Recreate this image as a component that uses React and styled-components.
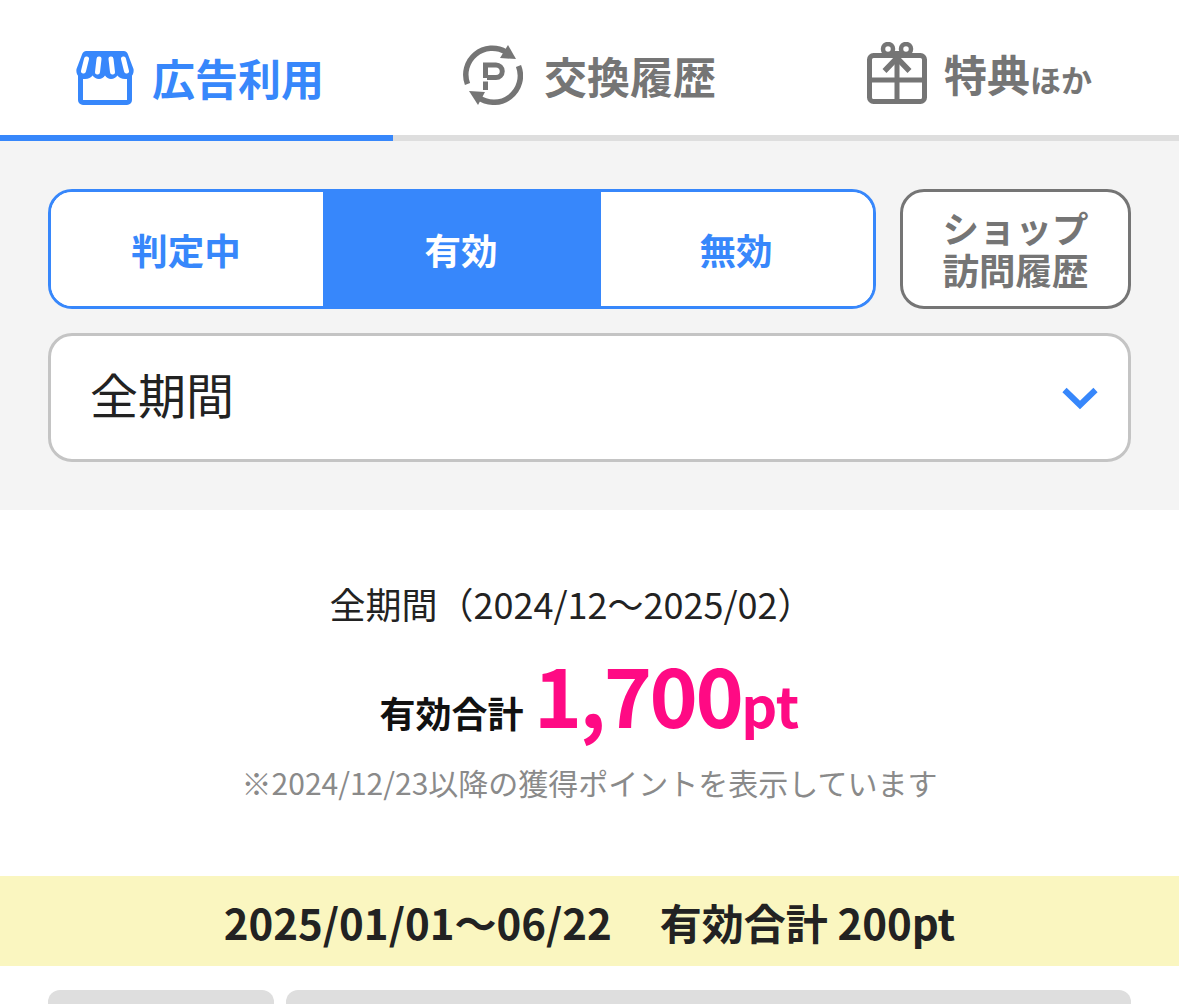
import React from 'react';
import styled, { createGlobalStyle } from 'styled-components';

const blue = '#3787fb';
const grey = '#757575';

const GlobalStyle = createGlobalStyle`
  html, body { margin: 0; padding: 0; background: #fff; }
  body {
    font-family: "Noto Sans CJK JP", "Noto Sans", sans-serif;
    color: #222;
    overflow: hidden;
  }
`;

const Page = styled.div`
  width: 1179px;
  height: 1004px;
  overflow: hidden;
`;

const Tabs = styled.nav`
  display: grid;
  grid-template-columns: repeat(3, 393px);
  height: 141px;
`;

const Tab = styled.div`
  display: flex;
  align-items: center;
  justify-content: center;
  gap: ${(p) => p.$gap}px;
  padding: ${(p) => p.$top}px ${(p) => p.$right || 0}px 0 ${(p) => p.$left || 0}px;
  box-sizing: border-box;
  height: 141px;
  border-bottom: 6px solid ${(p) => (p.$active ? blue : '#dedede')};
  color: ${(p) => (p.$active ? blue : grey)};
  font-size: 43px;
  font-weight: 700;
  line-height: 1;
`;

const TabLabel = styled.span`
  margin-top: ${(p) => p.$shift || 0}px;
`;

const TabSmall = styled.span`
  font-size: 31px;
  font-weight: 700;
`;

const Filters = styled.section`
  background: #f4f4f4;
  height: 369px;
  box-sizing: border-box;
  padding: 48px;
  display: flex;
  flex-direction: column;
  gap: 24px;
`;

const FilterRow = styled.div`
  display: flex;
  gap: 24px;
`;

const Segments = styled.div`
  width: 828px;
  height: 120px;
  box-sizing: border-box;
  border: 3px solid ${blue};
  border-radius: 24px;
  background: #fff;
  overflow: hidden;
  display: grid;
  grid-template-columns: 272px 278px 1fr;
`;

const Segment = styled.div`
  display: flex;
  align-items: center;
  justify-content: center;
  padding-right: 2px;
  font-size: 36.5px;
  font-weight: 700;
  background: ${(p) => (p.$active ? blue : '#fff')};
  color: ${(p) => (p.$active ? '#fff' : blue)};
`;

const ShopButton = styled.div`
  width: 231px;
  height: 120px;
  box-sizing: border-box;
  border: 3px solid ${grey};
  border-radius: 24px;
  background: #fff;
  color: ${grey};
  display: flex;
  align-items: center;
  justify-content: center;
  text-align: center;
  font-size: 36.5px;
  font-weight: 700;
  line-height: 42px;
`;

const Select = styled.div`
  height: 129px;
  box-sizing: border-box;
  border: 3px solid #c4c4c4;
  border-radius: 24px;
  background: #fff;
  padding: 0 30px 0 39px;
  display: flex;
  align-items: center;
  justify-content: space-between;
  font-size: 48px;
  color: #222;
`;

const SelectValue = styled.span`
  margin-bottom: 10px;
`;

const Summary = styled.section`
  height: 366px;
  box-sizing: border-box;
  padding-top: 68px;
  display: flex;
  flex-direction: column;
  align-items: center;
`;

const Period = styled.div`
  font-size: 36px;
  line-height: 50px;
  margin-right: 36px;
  color: #222;
`;

const TotalRow = styled.div`
  display: flex;
  align-items: baseline;
  justify-content: center;
  gap: 10px;
  margin-top: 12px;
  height: 106px;
  line-height: 106px;
  font-weight: 700;
`;

const TotalLabel = styled.span`
  font-size: 36px;
  color: #111;
`;

const TotalValue = styled.span`
  font-size: 82px;
  letter-spacing: -2.5px;
  color: #ff0a84;
`;

const TotalUnit = styled.span`
  font-size: 56px;
  letter-spacing: 0;
`;

const Note = styled.div`
  font-size: 30px;
  line-height: 44px;
  margin-top: 14px;
  color: #8a8a8a;
`;

const Band = styled.div`
  height: 90px;
  background: #faf6c0;
  display: flex;
  align-items: center;
  justify-content: center;
  gap: 48px;
  font-size: 42px;
  font-weight: 700;
  color: #222;
`;

const Cards = styled.div`
  display: flex;
  gap: 12px;
  padding: 24px 48px 0;
`;

const CardHead = styled.div`
  flex: ${(p) => (p.$wide ? '1' : '0 0 226px')};
  height: 60px;
  background: #dedede;
  border-radius: 12px;
`;

const IconBox = styled.svg`
  display: block;
  flex: none;
`;

const StoreIcon = () => (
  <IconBox width="58" height="54" viewBox="0 0 58 54">
    <rect x="4.5" y="16" width="49" height="35.5" rx="2.5" fill="#fff" stroke={blue} strokeWidth="5" />
    <path d="M11 0 H47 a5 5 0 0 1 5 3.5 L57.5 18 C58.5 24 54 28 49 28 C45.5 28 43 26.5 41.5 24.5 C39.5 26.5 38 28 35 28 C32.5 28 30.5 26.5 29 24.5 C27.5 26.5 25.5 28 23 28 C20 28 18.5 26.5 16.5 24.5 C15 26.5 12.5 28 9 28 C4 28 -0.5 24 0.5 18 L6 3.5 A5 5 0 0 1 11 0 Z" fill={blue} />
    <path d="M10.5 8 L7.5 20 M23 8 L21.5 21 M35 8 L36.5 21 M47.5 8 L50.5 20" stroke="#fff" strokeWidth="5" strokeLinecap="round" fill="none" />
  </IconBox>
);

const PointIcon = () => (
  <IconBox width="60" height="60" viewBox="0 0 60 60">
    <path d="M4.5 39 A26.5 26.5 0 0 1 43 7" fill="none" stroke={grey} strokeWidth="5.5" />
    <path d="M55.5 21 A26.5 26.5 0 0 1 15 52" fill="none" stroke={grey} strokeWidth="5.5" />
    <path d="M45 0 L53 14 L37 13 Z" fill={grey} />
    <path d="M15 60 L6 46 L22 47 Z" fill={grey} />
    <path d="M22.5 33 V20 H33 a6.25 6.25 0 0 1 0 12.5 H24" fill="none" stroke={grey} strokeWidth="5" />
    <path d="M22.5 36.5 V45" fill="none" stroke={grey} strokeWidth="5" />
  </IconBox>
);

const GiftIcon = () => (
  <IconBox width="60" height="62" viewBox="0 0 60 62">
    <rect x="2.5" y="13.5" width="55" height="46" rx="4" fill="none" stroke={grey} strokeWidth="5" />
    <path d="M2 38 H58 M30 18 V60" stroke={grey} strokeWidth="5" />
    <circle cx="21" cy="7" r="5" fill="none" stroke={grey} strokeWidth="4.5" />
    <circle cx="39" cy="7" r="5" fill="none" stroke={grey} strokeWidth="4.5" />
    <path d="M30 16 L17.5 29 M30 16 L42.5 29" stroke={grey} strokeWidth="5.5" />
    <rect x="26" y="9" width="8" height="8" fill={grey} />
  </IconBox>
);

const ChevronIcon = () => (
  <IconBox width="36" height="24" viewBox="0 0 36 24">
    <path d="M2.5 4 L18 19 L33.5 4" fill="none" stroke={blue} strokeWidth="6" />
  </IconBox>
);

export default function App() {
  return (
    <Page>
      <GlobalStyle />
      <Tabs>
        <Tab $active $gap={18} $top={21} $left={7}>
          <StoreIcon />
          <TabLabel $shift={-2}>広告利用</TabLabel>
        </Tab>
        <Tab $gap={21} $top={15}>
          <PointIcon />
          <TabLabel>交換履歴</TabLabel>
        </Tab>
        <Tab $gap={17} $top={11} $right={6}>
          <GiftIcon />
          <TabLabel>
            特典<TabSmall>ほか</TabSmall>
          </TabLabel>
        </Tab>
      </Tabs>

      <Filters>
        <FilterRow>
          <Segments>
            <Segment>判定中</Segment>
            <Segment $active>有効</Segment>
            <Segment>無効</Segment>
          </Segments>
          <ShopButton>
            ショップ
            <br />
            訪問履歴
          </ShopButton>
        </FilterRow>
        <Select>
          <SelectValue>全期間</SelectValue>
          <ChevronIcon />
        </Select>
      </Filters>

      <Summary>
        <Period>全期間（2024/12〜2025/02）</Period>
        <TotalRow>
          <TotalLabel>有効合計</TotalLabel>
          <TotalValue>
            1,700<TotalUnit>pt</TotalUnit>
          </TotalValue>
        </TotalRow>
        <Note>※2024/12/23以降の獲得ポイントを表示しています</Note>
      </Summary>

      <Band>
        <span>2025/01/01〜06/22</span>
        <span>有効合計 200pt</span>
      </Band>

      <Cards>
        <CardHead />
        <CardHead $wide />
      </Cards>
    </Page>
  );
}
